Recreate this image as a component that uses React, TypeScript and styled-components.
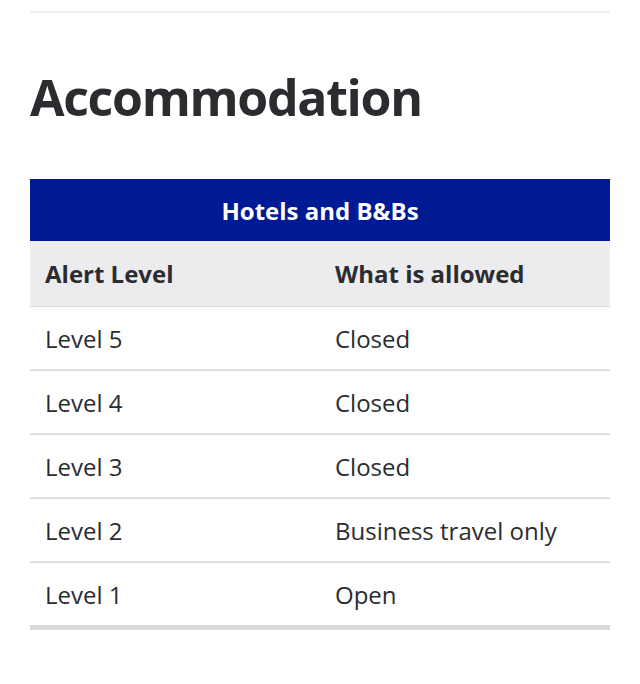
import React from "react";
import styled, { createGlobalStyle } from "styled-components";

const Global = createGlobalStyle`
  html, body { margin: 0; padding: 0; background: #ffffff; }
  body { font-family: "Open Sans", "Liberation Sans", sans-serif; color: #2b2c30; }
`;

const Page = styled.div`
  padding: 11px 30px 40px;
`;

const Rule = styled.hr`
  margin: 0;
  border: 0;
  border-top: 2px solid #f0f0f0;
`;

const Heading = styled.h2`
  margin: 54px 0 52px;
  font-size: 50px;
  line-height: 60px;
  font-weight: 700;
  color: #2b2c30;
  letter-spacing: -1.3px;
`;

const Table = styled.table`
  width: 100%;
  border-collapse: collapse;
  table-layout: fixed;
  border-bottom: 5px solid #d9d9d9;
`;

const Caption = styled.th`
  background: #001a94;
  color: #ffffff;
  font-size: 24px;
  font-weight: 700;
  height: 62px;
  padding: 0;
  text-align: center;
`;

const HeadCell = styled.th`
  background: #ecebed;
  height: 65px;
  padding: 0 15px;
  text-align: left;
  font-size: 24px;
  font-weight: 700;
  color: #2b2c30;
  border-bottom: 1px solid #dcdcdc;
`;

const Cell = styled.td<{ $last?: boolean }>`
  height: 62px;
  padding: 0 15px;
  font-size: 24px;
  font-weight: 400;
  color: #2b2c30;
  border-bottom: ${(p) => (p.$last ? "0" : "2px solid #dedede")};
`;

const rows = [
  ["Level 5", "Closed"],
  ["Level 4", "Closed"],
  ["Level 3", "Closed"],
  ["Level 2", "Business travel only"],
  ["Level 1", "Open"],
];

export default function App() {
  return (
    <>
      <Global />
      <Page>
        <Rule />
        <Heading>Accommodation</Heading>
        <Table>
          <thead>
            <tr>
              <Caption colSpan={2}>Hotels and B&amp;Bs</Caption>
            </tr>
            <tr>
              <HeadCell>Alert Level</HeadCell>
              <HeadCell>What is allowed</HeadCell>
            </tr>
          </thead>
          <tbody>
            {rows.map(([a, b], i) => (
              <tr key={a}>
                <Cell $last={i === rows.length - 1}>{a}</Cell>
                <Cell $last={i === rows.length - 1}>{b}</Cell>
              </tr>
            ))}
          </tbody>
        </Table>
      </Page>
    </>
  );
}
